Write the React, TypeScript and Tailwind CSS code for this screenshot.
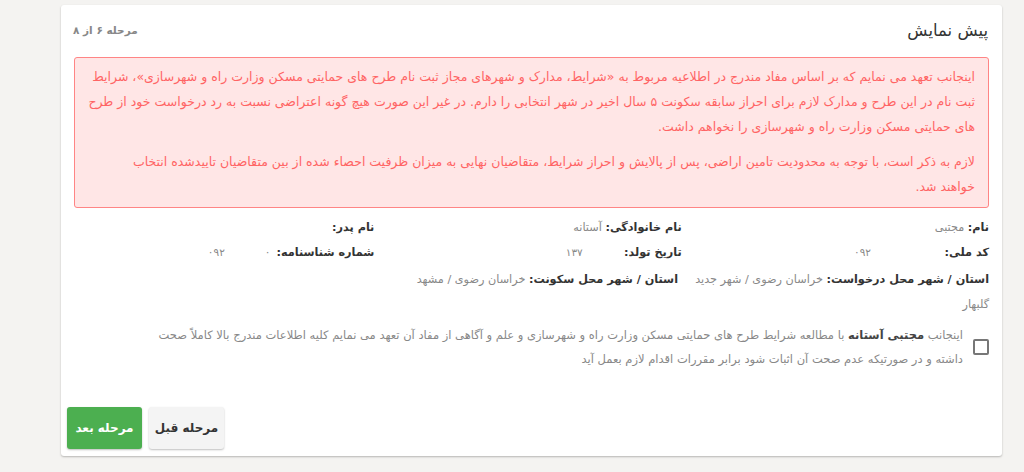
import { useState } from 'react';

const FONT = "font-['DejaVu_Sans',sans-serif]";

export default function App() {
  const [agreed, setAgreed] = useState(false);

  return (
    <div className={`min-h-[472px] w-[1024px] bg-[#f4f3f1] pt-[5px] ${FONT}`}>
      <div
        dir="rtl"
        className="ml-[61px] w-[941px] rounded-[3px] bg-white pb-[7px] pl-[6px] pr-[13px] shadow-[0_1px_2px_rgba(0,0,0,0.25)]"
      >
        {/* Header */}
        <div className="flex h-[52px] items-center justify-between pl-[6px] pr-[1px]">
          <h2 className="text-[16.5px] text-[#333]">پیش نمایش</h2>
          <span className="text-[10.5px] font-bold text-[#888]">مرحله ۶ از ۸</span>
        </div>

        {/* Warning */}
        <div className="ml-[7px] rounded-[3px] border border-[#ff8585] bg-[#ffe6e6] px-[13px] pb-[8px] pt-[6px] text-[12.5px] leading-[25px] text-[#ff6464]">
          <p>
            اینجانب تعهد می نمایم که بر اساس مفاد مندرج در اطلاعیه مربوط به «شرایط، مدارک و شهرهای مجاز ثبت نام طرح های حمایتی مسکن وزارت راه و شهرسازی»، شرایط ثبت نام در این طرح و مدارک لازم برای احراز سابقه سکونت ۵ سال اخیر در شهر انتخابی را دارم. در غیر این صورت هیچ گونه اعتراضی نسبت به رد درخواست خود از طرح های حمایتی مسکن وزارت راه و شهرسازی را نخواهم داشت.
          </p>
          <p className="mt-[10px] pl-[40px]">
            لازم به ذکر است، با توجه به محدودیت تامین اراضی، پس از پالایش و احراز شرایط، متقاضیان نهایی به میزان ظرفیت احصاء شده از بین متقاضیان تاییدشده انتخاب خواهند شد.
          </p>
        </div>

        {/* Info */}
        <div className="pt-[7px] text-[11.25px] leading-[25px]">
          <div className="flex">
            <div className="w-[311px]">
              <b className="text-[#333]">نام:</b> <span className="text-[#888]">مجتبی</span>
            </div>
            <div className="w-[311px]">
              <b className="text-[#333]">نام خانوادگی:</b> <span className="text-[#888]">آستانه</span>
            </div>
            <div className="w-[311px]">
              <b className="text-[#333]">نام پدر:</b>
            </div>
          </div>
          <div className="flex">
            <div className="flex w-[311px]">
              <b className="w-[118px] text-[#333]">کد ملی:</b>
              <span className="text-[10.5px] text-[#888]">۰۹۲</span>
            </div>
            <div className="flex w-[311px]">
              <b className="w-[99px] text-[#333]">تاریخ تولد:</b>
              <span className="text-[10.5px] text-[#888]">۱۳۷</span>
            </div>
            <div className="flex w-[311px]">
              <b className="text-[#333]">شماره شناسنامه:</b>
              <span className="mr-[6px] text-[10.5px] text-[#888]">۰</span>
              <span className="mr-[40px] text-[10.5px] text-[#888]">۰۹۲</span>
            </div>
          </div>
          <div className="flex whitespace-nowrap pt-[2px]">
            <div className="w-[311px]">
              <b className="text-[#333]">استان / شهر محل درخواست:</b>{' '}
              <span className="text-[#888]">خراسان رضوی / شهر جدید</span>
            </div>
            <div>
              <b className="text-[#333]">استان / شهر محل سکونت:</b>{' '}
              <span className="text-[#888]">خراسان رضوی / مشهد</span>
            </div>
          </div>
          <div className="text-[#888]">گلبهار</div>
        </div>

        {/* Agreement */}
        <label className="mt-[6px] flex cursor-pointer items-center gap-[10px] text-[11.5px] leading-[24px] text-[#888]">
          <input
            type="checkbox"
            checked={agreed}
            onChange={(e) => setAgreed(e.target.checked)}
            className="h-[16px] w-[16px] shrink-0 cursor-pointer appearance-none rounded-[2px] border-2 border-[#777] bg-white checked:bg-[#4caf50]"
          />
          <span className="w-[820px]">
            اینجانب <b className="text-[#444]">مجتبی آستانه</b> با مطالعه شرایط طرح های حمایتی مسکن وزارت راه و شهرسازی و علم و آگاهی از مفاد آن تعهد می نمایم کلیه اطلاعات مندرج بالا کاملاً صحت داشته و در صورتیکه عدم صحت آن اثبات شود برابر مقررات اقدام لازم بعمل آید
          </span>
        </label>

        {/* Buttons */}
        <div className="mt-[36px] flex justify-end gap-[7px]">
          <button className="h-[42px] w-[75px] rounded-[3px] bg-[#f4f4f4] text-[12px] font-bold text-[#333] shadow-[0_1px_2px_rgba(0,0,0,0.25)]">
            مرحله قبل
          </button>
          <button className="h-[42px] w-[75px] rounded-[3px] bg-[#4caf50] text-[12px] font-bold text-white shadow-[0_1px_2px_rgba(0,0,0,0.25)]">
            مرحله بعد
          </button>
        </div>
      </div>
    </div>
  );
}
